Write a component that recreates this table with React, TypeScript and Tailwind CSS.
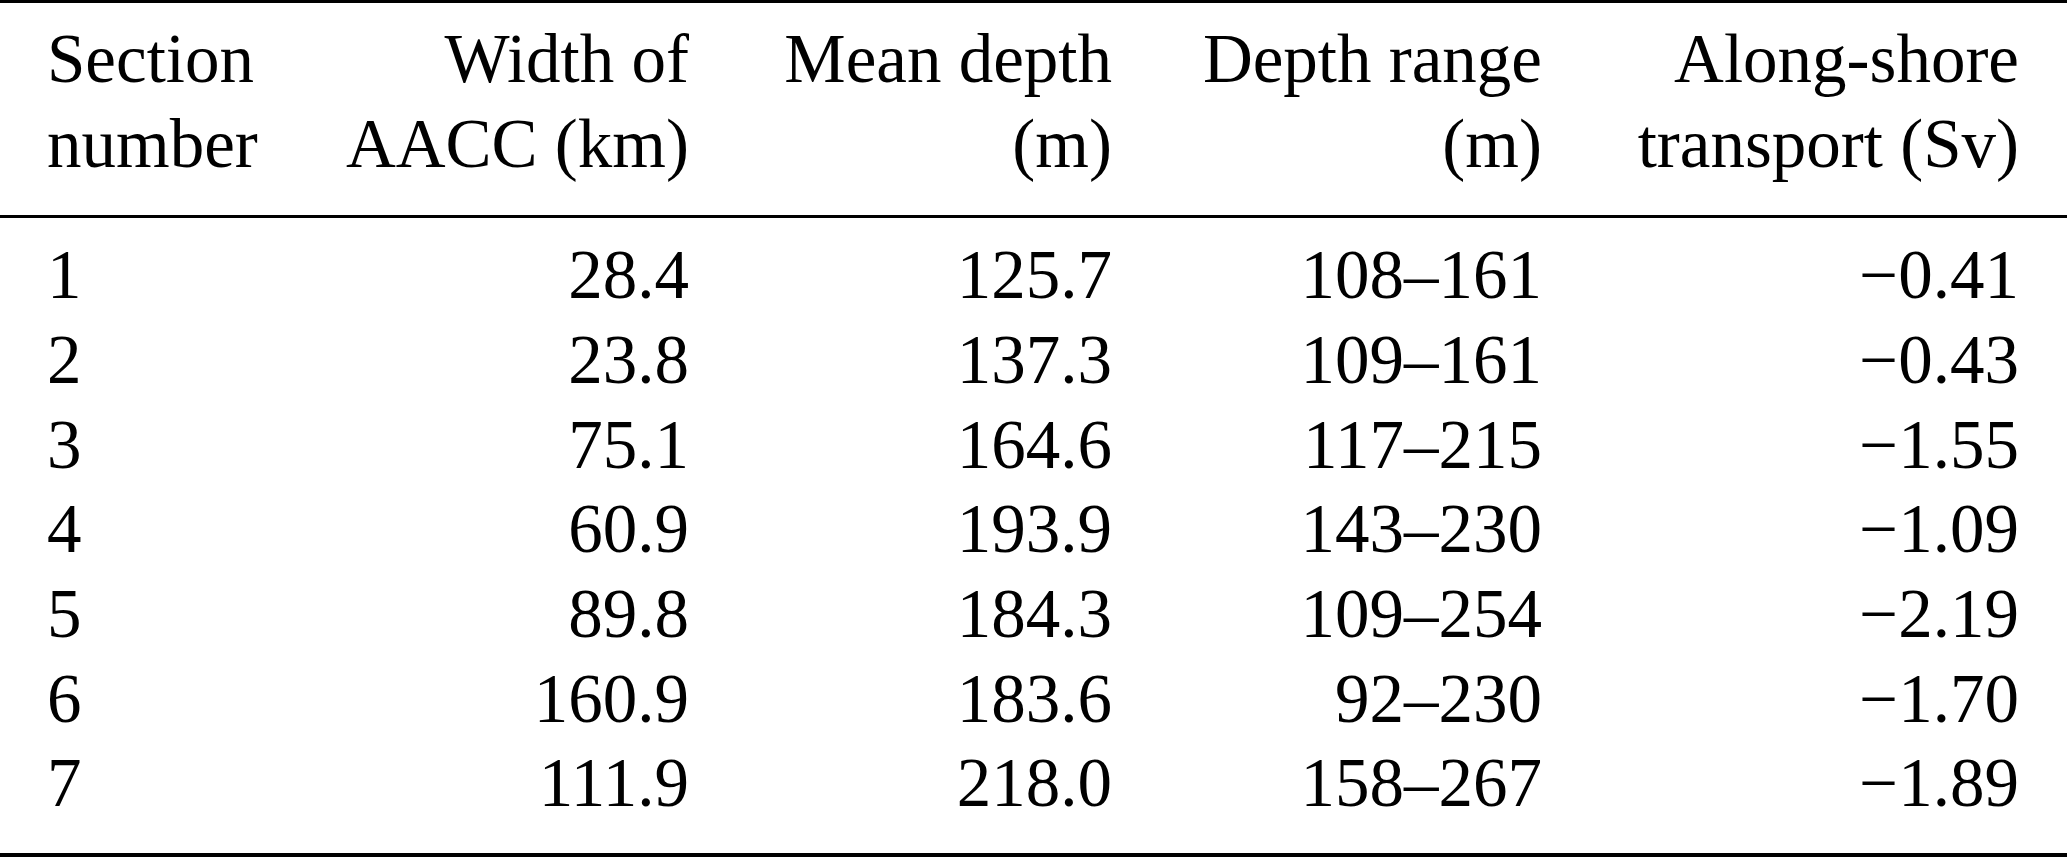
import React from "react";

const rows: string[][] = [
  ["1", "28.4", "125.7", "108–161", "−0.41"],
  ["2", "23.8", "137.3", "109–161", "−0.43"],
  ["3", "75.1", "164.6", "117–215", "−1.55"],
  ["4", "60.9", "193.9", "143–230", "−1.09"],
  ["5", "89.8", "184.3", "109–254", "−2.19"],
  ["6", "160.9", "183.6", "92–230", "−1.70"],
  ["7", "111.9", "218.0", "158–267", "−1.89"],
];

const header: string[][] = [
  ["Section", "Width of", "Mean depth", "Depth range", "Along-shore"],
  ["number", "AACC (km)", "(m)", "(m)", "transport (Sv)"],
];

function Row({ cells }: { cells: string[] }) {
  return (
    <div className="grid grid-cols-[283px_359px_423px_430px_477px] pl-[47px] h-[84.67px] leading-[84.67px] whitespace-nowrap">
      <div className="text-left">{cells[0]}</div>
      <div className="text-right">{cells[1]}</div>
      <div className="text-right">{cells[2]}</div>
      <div className="text-right">{cells[3]}</div>
      <div className="text-right">{cells[4]}</div>
    </div>
  );
}

export default function App() {
  return (
    <div className="w-[2067px] h-[858px] bg-white text-black text-[69px] overflow-hidden font-['Liberation_Serif','Times_New_Roman',Times,serif]">
      <div className="h-[3px] bg-black" />
      <div className="pt-[14px] pb-[29px]">
        {header.map((r, i) => (
          <Row key={i} cells={r} />
        ))}
      </div>
      <div className="h-[3px] bg-black" />
      <div className="pt-[15px] pb-[27px]">
        {rows.map((r, i) => (
          <Row key={i} cells={r} />
        ))}
      </div>
      <div className="h-[4px] bg-black" />
    </div>
  );
}
